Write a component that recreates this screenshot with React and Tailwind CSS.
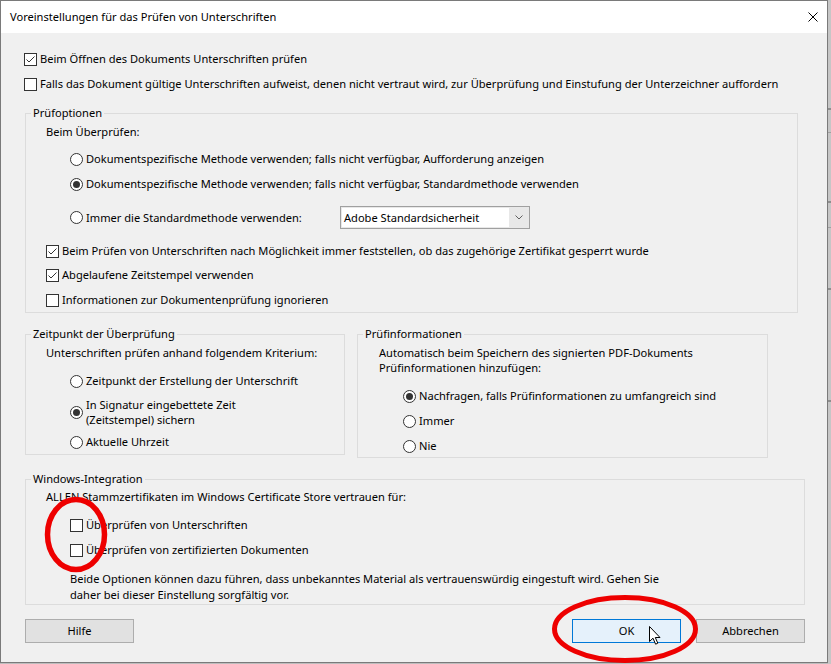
import React from "react";

function Check({ checked }) {
  return (
    <span className="w-[13px] h-[13px] border border-[#333333] bg-white flex items-center justify-center shrink-0">
      {checked && (
        <svg width="11" height="11" viewBox="0 0 11 11">
          <path d="M1.5 5.5 L4 8 L9.5 2.5" fill="none" stroke="#333333" strokeWidth="1" />
        </svg>
      )}
    </span>
  );
}

function Radio({ checked }) {
  return (
    <span className="w-[13px] h-[13px] rounded-full border border-[#333333] bg-white flex items-center justify-center shrink-0">
      {checked && <span className="w-[7px] h-[7px] rounded-full bg-[#333333]" />}
    </span>
  );
}

function CheckRow({ checked, children, className = "" }) {
  return (
    <div className={"flex items-center h-[16px] gap-[3px] " + className}>
      <Check checked={checked} />
      <span className="whitespace-nowrap">{children}</span>
    </div>
  );
}

function RadioRow({ checked, children, className = "" }) {
  return (
    <div className={"flex items-center h-[16px] gap-[3px] " + className}>
      <Radio checked={checked} />
      <span className="whitespace-nowrap">{children}</span>
    </div>
  );
}

function Group({ title, className = "", children }) {
  return (
    <fieldset className={"border border-[#dcdcdc] p-0 m-0 min-w-0 " + className}>
      <legend className="ml-[5px] px-[2px] leading-[16px] h-[16px]">{title}</legend>
      {children}
    </fieldset>
  );
}

function Button({ children, primary, className = "" }) {
  return (
    <div
      className={
        "w-[109px] h-[24px] flex items-center justify-center border " +
        (primary ? "bg-[#e5f1fb] border-[#0078d7] " : "bg-[#e1e1e1] border-[#adadad] ") +
        className
      }
    >
      {children}
    </div>
  );
}

export default function App() {
  return (
    <div
      className="w-[831px] h-[664px] bg-[#bdbdbd] relative overflow-hidden flex items-start text-black text-[11.1px] leading-[16px]"
      style={{ fontFamily: '"Segoe UI", "Noto Sans", sans-serif' }}
    >
      <div className="w-[828px] h-[663px] border border-[#7a7a7a] bg-[#f0f0f0] flex flex-col shrink-0">
        {/* Title bar */}
        <div className="h-[32px] bg-white flex items-center justify-between pl-[9px] pr-[9px] shrink-0">
          <span className="whitespace-nowrap">Voreinstellungen für das Prüfen von Unterschriften</span>
          <svg width="10" height="10" viewBox="0 0 10 10">
            <path d="M0.5 0.5 L9.5 9.5 M9.5 0.5 L0.5 9.5" stroke="#000" strokeWidth="1" fill="none" />
          </svg>
        </div>

        {/* Body */}
        <div className="flex flex-col pl-[23px] pt-[18px]">
          <CheckRow checked>Beim Öffnen des Dokuments Unterschriften prüfen</CheckRow>
          <CheckRow className="mt-[9px]">
            Falls das Dokument gültige Unterschriften aufweist, denen nicht vertraut wird, zur Überprüfung und Einstufung der Unterzeichner auffordern
          </CheckRow>

          <Group title="Prüfoptionen" className="mt-[13px] ml-[1px] w-[773px]">
            <div className="flex flex-col pl-[20px] pt-[3px] pb-[4px]">
              <div className="h-[16px] whitespace-nowrap">Beim Überprüfen:</div>
              <RadioRow className="mt-[11px] ml-[24px]">
                Dokumentspezifische Methode verwenden; falls nicht verfügbar, Aufforderung anzeigen
              </RadioRow>
              <RadioRow checked className="mt-[9px] ml-[24px]">
                Dokumentspezifische Methode verwenden; falls nicht verfügbar, Standardmethode verwenden
              </RadioRow>
              <div className="mt-[14px] ml-[24px] h-[23px] flex items-center">
                <div className="w-[270px] flex items-center gap-[3px]">
                  <Radio />
                  <span className="whitespace-nowrap">Immer die Standardmethode verwenden:</span>
                </div>
                <div className="w-[190px] h-[23px] border border-[#a0a0a0] bg-[#e8e8e8] p-[1px] flex">
                  <div className="w-[167px] bg-white flex items-center pl-[2px] whitespace-nowrap">
                    Adobe Standardsicherheit
                  </div>
                  <div className="flex-1 flex items-center justify-center">
                    <svg width="8" height="5" viewBox="0 0 8 5">
                      <path d="M0.5 0.5 L4 4 L7.5 0.5" fill="none" stroke="#606060" strokeWidth="1" />
                    </svg>
                  </div>
                </div>
              </div>
              <CheckRow checked className="mt-[14px]">
                Beim Prüfen von Unterschriften nach Möglichkeit immer feststellen, ob das zugehörige Zertifikat gesperrt wurde
              </CheckRow>
              <CheckRow checked className="mt-[8px]">Abgelaufene Zeitstempel verwenden</CheckRow>
              <CheckRow className="mt-[9px]">Informationen zur Dokumentenprüfung ignorieren</CheckRow>
            </div>
          </Group>

          <div className="mt-[13px] ml-[1px] flex items-start gap-[12px]">
            <Group title="Zeitpunkt der Überprüfung" className="w-[320px]">
              <div className="flex flex-col pl-[20px] pt-[3px] pb-[4px]">
                <div className="h-[16px] whitespace-nowrap">Unterschriften prüfen anhand folgendem Kriterium:</div>
                <RadioRow className="mt-[12px] ml-[24px]">Zeitpunkt der Erstellung der Unterschrift</RadioRow>
                <div className="mt-[8px] ml-[24px] flex items-center gap-[3px]">
                  <Radio checked />
                  <span className="leading-[15px] whitespace-nowrap">
                    In Signatur eingebettete Zeit
                    <br />
                    (Zeitstempel) sichern
                  </span>
                </div>
                <RadioRow className="mt-[7px] ml-[24px]">Aktuelle Uhrzeit</RadioRow>
              </div>
            </Group>

            <Group title="Prüfinformationen" className="w-[411px]">
              <div className="flex flex-col pl-[21px] pt-[3px] pb-[3px]">
                <div className="leading-[15px] whitespace-nowrap">
                  Automatisch beim Speichern des signierten PDF-Dokuments
                  <br />
                  Prüfinformationen hinzufügen:
                </div>
                <RadioRow checked className="mt-[13px] ml-[24px]">
                  Nachfragen, falls Prüfinformationen zu umfangreich sind
                </RadioRow>
                <RadioRow className="mt-[9px] ml-[24px]">Immer</RadioRow>
                <RadioRow className="mt-[9px] ml-[24px]">Nie</RadioRow>
              </div>
            </Group>
          </div>

          <Group title="Windows-Integration" className="mt-[13px] ml-[1px] w-[780px]">
            <div className="flex flex-col pl-[20px] pt-[2px] pb-[1px]">
              <div className="h-[16px] whitespace-nowrap">
                ALLEN Stammzertifikaten im Windows Certificate Store vertrauen für:
              </div>
              <CheckRow className="mt-[12px] ml-[24px]">Überprüfen von Unterschriften</CheckRow>
              <CheckRow className="mt-[9px] ml-[24px]">Überprüfen von zertifizierten Dokumenten</CheckRow>
              <div className="mt-[13px] ml-[24px] leading-[16px] whitespace-nowrap">
                Beide Optionen können dazu führen, dass unbekanntes Material als vertrauenswürdig eingestuft wird. Gehen Sie
                <br />
                daher bei dieser Einstellung sorgfältig vor.
              </div>
            </div>
          </Group>

          <div className="mt-[14px] ml-[1px] w-[780px] flex items-center">
            <Button>Hilfe</Button>
            <Button primary className="ml-auto">OK</Button>
            <Button className="ml-[15px]">Abbrechen</Button>
          </div>
        </div>
      </div>

      {/* background window edge on the right */}
      <div className="w-[3px] h-[664px] bg-[#c6c6c6] flex flex-col shrink-0">
        <div className="h-[108px]" />
        <div className="h-[2px] bg-[#8e8e8e]" />
        <div className="h-[22px]" />
        <div className="h-[1px] bg-[#a0a0a0]" />
        <div className="h-[68px]" />
        <div className="h-[2px] bg-[#8e8e8e]" />
        <div className="h-[24px]" />
        <div className="h-[1px] bg-[#a0a0a0]" />
        <div className="h-[60px]" />
        <div className="h-[2px] bg-[#8e8e8e]" />
        <div className="h-[110px]" />
        <div className="h-[2px] bg-[#8e8e8e]" />
      </div>

      {/* red annotation ellipses */}
      <svg className="absolute left-0 top-0 pointer-events-none" width="831" height="664" viewBox="0 0 831 664">
        <ellipse cx="76" cy="534.5" rx="28.5" ry="35" fill="none" stroke="#ee0000" strokeWidth="5.5" />
        <ellipse cx="625" cy="629" rx="70.5" ry="31.5" fill="none" stroke="#ee0000" strokeWidth="5" />
      </svg>

      {/* mouse cursor */}
      <svg className="absolute left-[649px] top-[626px] pointer-events-none" width="13" height="19" viewBox="0 0 13 19">
        <path
          d="M0.5 0.5 L0.5 15.5 L4 12.2 L6.6 18.2 L8.8 17.2 L6.3 11.5 L11 11.5 Z"
          fill="#ffffff"
          stroke="#000000"
          strokeWidth="1"
          strokeLinejoin="miter"
        />
      </svg>
    </div>
  );
}
